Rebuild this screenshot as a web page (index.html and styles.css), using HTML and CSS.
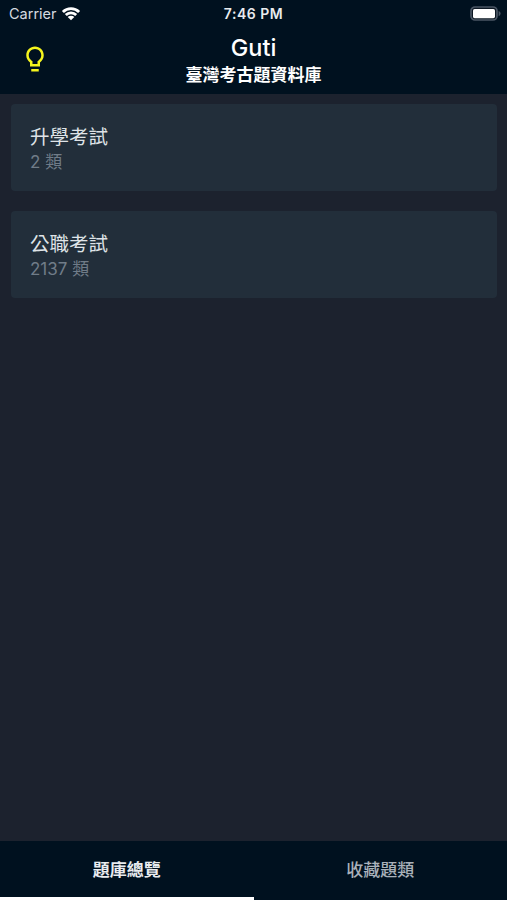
FILE: index.html
```
<!DOCTYPE html>
<html lang="zh-Hant">

<head>
    <meta charset="UTF-8">
    <title>Guti 臺灣考古題資料庫</title>
    <link rel="stylesheet" href="styles.css">
</head>

<body>
    <header class="header">
        <div class="status-bar">
            <div class="carrier">
                <span>Carrier</span>
                <svg class="wifi" width="20" height="16" viewBox="0 0 20 16">
                    <path d="M.9 4.9a13 13 0 0 1 18.2 0l-2 2.1a10.1 10.1 0 0 0-14.2 0z" />
                    <path d="M3.8 8a8.8 8.8 0 0 1 12.4 0l-2 2a6 6 0 0 0-8.4 0z" />
                    <path d="M6.7 11a4.7 4.7 0 0 1 6.6 0L10 14.3z" />
                </svg>
            </div>
            <span class="time">7:46 PM</span>
            <svg class="battery" width="31" height="16" viewBox="0 0 31 16">
                <rect x="1" y="1" width="26" height="13" rx="4" fill="#0d1823" stroke="#4a5664" stroke-width="1.7" />
                <rect x="3" y="3" width="22" height="9.2" rx="1.6" fill="#fff" />
                <path d="M28.6 5v5.2c1.2-.5 2-1.5 2-2.6s-.8-2.1-2-2.6z" fill="#4a5664" />
            </svg>
        </div>
        <div class="nav-bar">
            <svg class="bulb" width="30" height="30" viewBox="0 0 24 24">
                <path d="M9 22h6v-2H9zM12 2C8.14 2 5 5.14 5 9c0 2.38 1.19 4.47 3 5.74V18h8v-3.26c1.81-1.27 3-3.36 3-5.74 0-3.86-3.14-7-7-7zm2.85 11.1l-.85.6V16h-4v-2.3l-.85-.6C7.8 12.16 7 10.63 7 9c0-2.76 2.24-5 5-5s5 2.24 5 5c0 1.63-.8 3.16-2.15 4.1z" />
            </svg>
            <div class="titles">
                <h1>Guti</h1>
                <h2>臺灣考古題資料庫</h2>
            </div>
        </div>
    </header>

    <main class="list">
        <div class="card">
            <div class="card-title">升學考試</div>
            <div class="card-count">2 類</div>
        </div>
        <div class="card">
            <div class="card-title">公職考試</div>
            <div class="card-count">2137 類</div>
        </div>
    </main>

    <nav class="tabs">
        <a class="tab active">題庫總覽</a>
        <a class="tab">收藏題類</a>
    </nav>
</body>

</html>
```
FILE: styles.css
```
* {
    box-sizing: border-box;
}

body {
    display: flex;
    flex-direction: column;
    height: 100vh;
    margin: 0;
    overflow: hidden;
    background-color: #1c222e;
    color: #fff;
    font-family: Inter, "Noto Sans CJK TC", sans-serif;
}

.header {
    height: 94px;
    background-color: #00111f;
}

.status-bar {
    display: grid;
    grid-template-columns: 1fr auto 1fr;
    align-items: center;
    height: 27px;
    padding: 0 6px 0 6px;
}

.carrier {
    display: flex;
    align-items: center;
    gap: 4px;
    padding-left: 3px;
    color: #d5dae0;
    font-size: 14.5px;
}

.wifi {
    fill: #fff;
}

.time {
    color: #e8ebee;
    font-size: 14px;
    font-weight: 600;
    letter-spacing: 0.5px;
}

.battery {
    justify-self: end;
}

.nav-bar {
    display: grid;
    grid-template-columns: 60px 1fr 60px;
    height: 67px;
    padding: 0 20px;
}

.bulb {
    margin-top: 17px;
    fill: #f5f51d;
}

.titles {
    padding-top: 6px;
    text-align: center;
}

h1 {
    margin: 0;
    font-size: 23.5px;
    font-weight: 500;
    line-height: 30px;
}

h2 {
    margin: 0;
    font-size: 17px;
    font-weight: 700;
    line-height: 24px;
}

.list {
    display: flex;
    flex: 1;
    flex-direction: column;
    gap: 20px;
    padding: 10px 10px 0 11px;
}

.card {
    height: 87px;
    padding: 20px 19px;
    border-radius: 4px;
    background-color: #222e3a;
}

.card-title {
    color: #dfe3e7;
    font-size: 19.5px;
    line-height: 26px;
}

.card-count {
    color: #707c88;
    font-size: 17px;
    line-height: 24px;
}

.tabs {
    display: flex;
    height: 59px;
    background-color: #00111f;
}

.tab {
    flex: 1;
    padding-top: 17px;
    border-bottom: 3px solid transparent;
    color: #a9b1ba;
    font-size: 17px;
    font-weight: 500;
    line-height: 25px;
    text-align: center;
}

.tab.active {
    border-bottom-color: #fff;
    color: #e9ecef;
    font-weight: 700;
}
```
